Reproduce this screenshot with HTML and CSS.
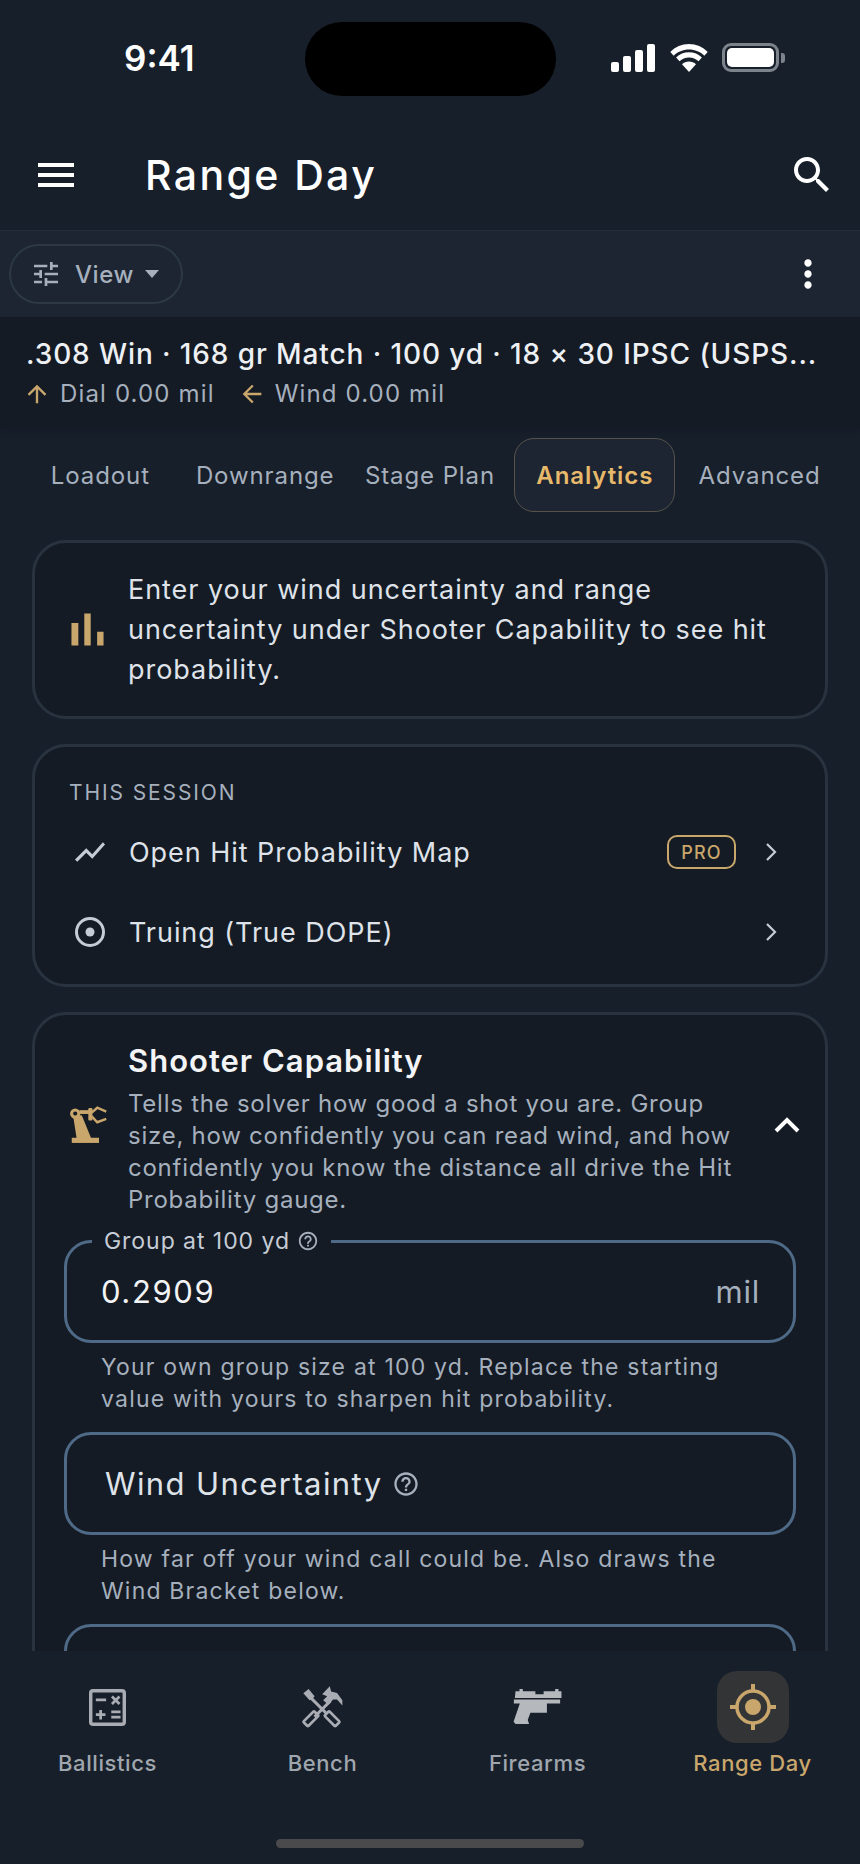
FILE: index.html
```html
<!DOCTYPE html>
<html lang="en">
<head>
  <meta charset="UTF-8">
  <meta name="viewport" content="width=device-width, initial-scale=1.0">
  <title>Range Day</title>
  <link rel="stylesheet" href="styles.css">
</head>
<body>
  <div class="status-bar">
    <span class="clock">9:41</span>
    <div class="island"></div>
    <div class="status-icons">
      <svg class="signal" width="44" height="28" viewBox="0 0 44 28"><rect x="0" y="18" width="8" height="10" rx="2"/><rect x="12" y="12" width="8" height="16" rx="2"/><rect x="24" y="6" width="8" height="22" rx="2"/><rect x="36" y="0" width="8" height="28" rx="2"/></svg>
      <svg class="wifi" width="40" height="28" viewBox="0 0 40 28"><path d="M20 5.500c6 0 11.300 2.300 15.300 6.200l3.400-3.800C33.800 3 27.200 0 20 0S6.200 3 1.300 7.900l3.400 3.800C8.700 7.800 14 5.500 20 5.500z"/><path d="M20 13.500c3.700 0 7 1.400 9.500 3.800l3.400-3.800C29.500 10.100 25 8.200 20 8.200s-9.500 1.900-12.900 5.300l3.400 3.800c2.500-2.400 5.800-3.800 9.500-3.800z"/><path d="M20 28l7-7.800c-1.900-1.700-4.300-2.700-7-2.700s-5.100 1-7 2.700z"/></svg>
      <div class="battery"><div class="battery-fill"></div></div>
      <div class="battery-nub"></div>
    </div>
  </div>

  <header class="app-bar">
    <svg class="menu-icon" width="48" height="48" viewBox="0 0 24 24"><path d="M3 18h18v-2H3v2zm0-5h18v-2H3v2zm0-7v2h18V6H3z"/></svg>
    <h1>Range Day</h1>
    <svg class="search-icon" width="48" height="48" viewBox="0 0 24 24"><path d="M15.500 14h-.79l-.28-.27C15.410 12.590 16 11.110 16 9.500 16 5.910 13.090 3 9.500 3S3 5.910 3 9.500 5.910 16 9.500 16c1.610 0 3.090-.59 4.230-1.570l.27.28v.79l5 4.990L20.490 19l-4.990-5zm-6 0C7.010 14 5 11.990 5 9.500S7.010 5 9.500 5 14 7.010 14 9.500 11.990 14 9.500 14z"/></svg>
  </header>

  <div class="toolbar">
    <div class="view-chip">
      <svg width="32" height="32" viewBox="0 0 24 24"><path d="M3 17v2h6v-2H3zM3 5v2h10V5H3zm10 16v-2h8v-2h-8v-2h-2v6h2zM7 9v2H3v2h4v2h2V9H7zm14 4v-2H11v2h10zm-6-4h2V7h4V5h-4V3h-2v6z"/></svg>
      <span>View</span>
      <div class="caret"></div>
    </div>
    <svg class="more-icon" width="44" height="44" viewBox="0 0 24 24"><path d="M12 8c1.100 0 2-.9 2-2s-.9-2-2-2-2 .9-2 2 .9 2 2 2zm0 2c-1.100 0-2 .9-2 2s.9 2 2 2 2-.9 2-2-.9-2-2-2zm0 6c-1.100 0-2 .9-2 2s.9 2 2 2 2-.9 2-2-.9-2-2-2z"/></svg>
  </div>

  <div class="summary">
    <div class="summary-title">.308 Win · 168 gr Match · 100 yd · 18 × 30 IPSC (USPS...</div>
    <div class="summary-meta">
      <svg class="dial-arrow" width="28" height="28" viewBox="0 0 24 24"><path d="M4 12l1.410 1.410L11 7.830V20h2V7.830l5.580 5.590L20 12l-8-8-8 8z"/></svg>
      <span>Dial 0.00 mil</span>
      <svg class="wind-arrow" width="28" height="28" viewBox="0 0 24 24"><path d="M20 11H7.830l5.590-5.590L12 4l-8 8 8 8 1.410-1.410L7.830 13H20v-2z"/></svg>
      <span>Wind 0.00 mil</span>
    </div>
  </div>

  <nav class="tabs">
    <div class="tab">Loadout</div>
    <div class="tab">Downrange</div>
    <div class="tab">Stage Plan</div>
    <div class="tab active">Analytics</div>
    <div class="tab">Advanced</div>
  </nav>

  <main class="content">
    <section class="card notice">
      <svg class="notice-icon" width="55" height="55" viewBox="0 0 24 24"><path d="M5 9.200h3V19H5zM10.600 5h2.800v14h-2.800zm5.600 8H19v6h-2.800z"/></svg>
      <p>Enter your wind uncertainty and range uncertainty under Shooter Capability to see hit probability.</p>
    </section>

    <section class="card session">
      <div class="section-label">THIS SESSION</div>
      <div class="row">
        <svg class="row-icon" width="36" height="36" viewBox="0 0 24 24"><path d="M3.500 18.490l6-6.010 4 4L22 6.920l-1.410-1.410-7.090 7.970-4-4L2 16.990z"/></svg>
        <span class="row-text">Open Hit Probability Map</span>
        <span class="pro-badge">PRO</span>
        <svg class="chevron" width="14" height="22" viewBox="0 0 14 22"><path d="M3 3l8 8-8 8"/></svg>
      </div>
      <div class="row">
        <svg class="row-icon" width="36" height="36" viewBox="0 0 36 36"><circle class="ring" cx="18" cy="18" r="13.500"/><circle cx="18" cy="18" r="4.500"/></svg>
        <span class="row-text">Truing (True DOPE)</span>
        <svg class="chevron" width="14" height="22" viewBox="0 0 14 22"><path d="M3 3l8 8-8 8"/></svg>
      </div>
    </section>

    <section class="card capability">
      <div class="capability-head">
        <svg class="robot-icon" width="40" height="42" viewBox="58 78 116 120">
          <rect x="66" y="175" width="79" height="15"/>
          <path d="M70 112L80 176H122L95 110z"/>
          <circle class="robot-joint" cx="76" cy="105" r="10.500"/>
          <rect x="88" y="95" width="28" height="11"/>
          <rect x="114" y="89" width="12" height="36" rx="3"/>
          <path class="robot-claw" d="M124 102L140 88L166 99M124 113L140 130L166 120"/>
        </svg>
        <div class="capability-text">
          <h2>Shooter Capability</h2>
          <p>Tells the solver how good a shot you are. Group size, how confidently you can read wind, and how confidently you know the distance all drive the Hit Probability gauge.</p>
        </div>
        <svg class="collapse-icon" width="28" height="18" viewBox="0 0 28 18"><path d="M3 15L14 4l11 11"/></svg>
      </div>

      <div class="field filled">
        <div class="field-label">
          <span>Group at 100 yd</span>
          <svg class="help" width="22" height="22" viewBox="0 0 24 24"><path d="M11 18h2v-2h-2v2zm1-16C6.480 2 2 6.480 2 12s4.480 10 10 10 10-4.480 10-10S17.520 2 12 2zm0 18c-4.410 0-8-3.590-8-8s3.590-8 8-8 8 3.590 8 8-3.590 8-8 8zm0-14c-2.210 0-4 1.790-4 4h2c0-1.100.9-2 2-2s2 .9 2 2c0 2-3 1.750-3 5h2c0-2.250 3-2.500 3-5 0-2.210-1.790-4-4-4z"/></svg>
        </div>
        <span class="field-value">0.2909</span>
        <span class="field-unit">mil</span>
      </div>
      <p class="helper">Your own group size at 100 yd. Replace the starting value with yours to sharpen hit probability.</p>

      <div class="field">
        <span class="field-placeholder">Wind Uncertainty</span>
        <svg class="help" width="28" height="28" viewBox="0 0 24 24"><path d="M11 18h2v-2h-2v2zm1-16C6.480 2 2 6.480 2 12s4.480 10 10 10 10-4.480 10-10S17.520 2 12 2zm0 18c-4.410 0-8-3.590-8-8s3.590-8 8-8 8 3.590 8 8-3.590 8-8 8zm0-14c-2.210 0-4 1.790-4 4h2c0-1.100.9-2 2-2s2 .9 2 2c0 2-3 1.750-3 5h2c0-2.250 3-2.500 3-5 0-2.210-1.790-4-4-4z"/></svg>
      </div>
      <p class="helper">How far off your wind call could be. Also draws the Wind Bracket below.</p>

      <div class="field"></div>
    </section>
  </main>

  <footer class="bottom-nav">
    <div class="nav-items">
      <div class="nav-item">
        <div class="nav-icon">
          <svg width="37" height="37" viewBox="0 0 108 108"><rect class="calc-frame" x="5" y="5" width="98" height="98" rx="7"/><path class="calc-marks" d="M20 32h30M67 22l22 22M89 22L67 44M20 75h28M34 61v28M65 67h27M65 82h27"/></svg>
        </div>
        <span>Ballistics</span>
      </div>
      <div class="nav-item">
        <div class="nav-icon">
          <svg width="42" height="43" viewBox="785 75 125 130">
            <path d="M788 97L804 84L822 106L815 115L807 118z"/>
            <path class="bench-shaft" d="M810 110L856 156M822 168L870 120"/>
            <rect class="bench-line" x="852" y="164" width="46" height="20" rx="3" transform="rotate(45 875 174)"/>
            <rect class="bench-line" x="788" y="164" width="46" height="20" rx="3" transform="rotate(-45 811 174)"/>
            <path d="M845 100L868 76L872 92L890 96L906 118V134L890 116H878L864 132L848 118L860 106z"/>
          </svg>
        </div>
        <span>Bench</span>
      </div>
      <div class="nav-item">
        <div class="nav-icon">
          <svg class="gun" width="50" height="38" viewBox="98 83 150 115"><path d="M105 93H117V86H127V93H165V102H190V93H225V86H235V93H244V113H103z"/><path d="M100 118H240V130H200V158H150L142 180L146 192H105L99 185L118 130H100z"/></svg>
        </div>
        <span>Firearms</span>
      </div>
      <div class="nav-item active">
        <div class="nav-icon">
          <svg width="46" height="46" viewBox="0 0 46 46"><circle class="gps-ring" cx="23" cy="23" r="16"/><circle cx="23" cy="23" r="8"/><path class="gps-ticks" d="M23 0v6M23 40v6M0 23h6M40 23h6"/></svg>
        </div>
        <span>Range Day</span>
      </div>
    </div>
    <div class="home-bar"></div>
  </footer>
</body>
</html>
```

FILE: styles.css
```css
* {
  box-sizing: border-box;
}

html, body {
  margin: 0;
  padding: 0;
}

body {
  width: 860px;
  height: 1864px;
  overflow: hidden;
  display: flex;
  flex-direction: column;
  background: #171f2b;
  color: #e6e9ee;
  font-family: Inter, "Noto Sans", sans-serif;
}

h1, h2, p {
  margin: 0;
  font-weight: normal;
}

/* status bar */
.status-bar {
  height: 115px;
  flex: none;
  display: flex;
  align-items: flex-start;
  padding: 22px 0 0 124px;
  color: #fff;
}

.clock {
  width: 181px;
  font-size: 35px;
  font-weight: 600;
  line-height: 72px;
  letter-spacing: 0;
}

.island {
  width: 251px;
  height: 74px;
  border-radius: 37px;
  background: #000;
}

.status-icons {
  margin-left: 55px;
  padding-top: 21px;
  display: flex;
  align-items: center;
  fill: #fff;
}

.wifi {
  margin-left: 14px;
}

.battery {
  margin-left: 13px;
  width: 57px;
  height: 29px;
  border: 3px solid #7d838b;
  border-radius: 9px;
  padding: 2px;
}

.battery-fill {
  height: 100%;
  border-radius: 5px;
  background: #fff;
}

.battery-nub {
  margin-left: 2px;
  width: 4px;
  height: 10px;
  border-radius: 0 3px 3px 0;
  background: #7d838b;
}

/* app bar */
.app-bar {
  height: 116px;
  flex: none;
  display: flex;
  align-items: center;
  padding: 4px 24px 0 32px;
  border-bottom: 1px solid #232e3b;
  fill: #fff;
}

.app-bar h1 {
  margin-left: 65px;
  flex: 1;
  font-size: 41px;
  font-weight: 500;
  letter-spacing: 2.4px;
  color: #fff;
}

/* view toolbar */
.toolbar {
  height: 86px;
  flex: none;
  display: flex;
  align-items: center;
  justify-content: space-between;
  padding: 0 30px 0 9px;
  background: #1c2531;
}

.view-chip {
  width: 174px;
  height: 60px;
  display: flex;
  align-items: center;
  padding-left: 19px;
  border: 2px solid #2c3846;
  border-radius: 30px;
  fill: #a6b0bd;
  color: #a6b0bd;
  font-size: 24px;
  font-weight: 500;
  letter-spacing: 0.6px;
}

.view-chip span {
  margin-left: 13px;
}

.caret {
  margin-left: 11px;
  width: 0;
  height: 0;
  border-left: 7px solid transparent;
  border-right: 7px solid transparent;
  border-top: 8px solid #a6b0bd;
}

.more-icon {
  fill: #fff;
}

/* ammo summary */
.summary {
  height: 110px;
  flex: none;
  padding: 18px 26px 0;
  background: #141b25;
  box-shadow: 0 3px 6px rgba(10, 14, 20, 0.2);
}

.summary-title {
  font-size: 28px;
  font-weight: 500;
  letter-spacing: 0.9px;
  line-height: 38px;
  color: #eef0f3;
  white-space: nowrap;
}

.summary-meta {
  margin-top: 2px;
  display: flex;
  align-items: center;
  fill: #c9a66b;
  color: #a6b0bd;
  font-size: 24px;
  letter-spacing: 1.15px;
  line-height: 38px;
}

.dial-arrow {
  margin-left: -3px;
}

.summary-meta span {
  margin-left: 9px;
}

.wind-arrow {
  margin-left: 23px;
}

/* tabs */
.tabs {
  height: 113px;
  flex: none;
  display: grid;
  grid-template-columns: repeat(5, 1fr);
  column-gap: 4px;
  align-content: start;
  padding: 11px 20px 0;
}

.tab {
  height: 74px;
  display: flex;
  align-items: center;
  justify-content: center;
  border: 1px solid transparent;
  border-radius: 20px;
  font-size: 24px;
  letter-spacing: 0.9px;
  color: #a6b0bd;
  white-space: nowrap;
}

.tab.active {
  border-color: #57534b;
  background: #1c2531;
  color: #e8b96a;
  font-weight: 600;
}

/* cards */
.content {
  flex: 1;
  min-height: 0;
  overflow: hidden;
  padding: 0 32px;
}

.card {
  border: 3px solid #28333f;
  border-radius: 34px;
  background: #141b25;
  margin-bottom: 25px;
}

.notice {
  height: 179px;
  display: flex;
  align-items: center;
  padding: 0 30px 0 25px;
  fill: #c9a66b;
}

.notice-icon {
  margin-right: 13px;
  flex: none;
}

.notice p {
  font-size: 27px;
  line-height: 40px;
  letter-spacing: 0.95px;
  color: #dfe3e9;
}

.session {
  height: 243px;
  padding: 29px 47px 0 34px;
}

.section-label {
  margin-bottom: 2px;
  font-size: 21px;
  letter-spacing: 1.9px;
  line-height: 34px;
  color: #a6b0bd;
}

.row {
  height: 80px;
  display: flex;
  align-items: center;
}

.row-icon {
  flex: none;
  fill: #c6ccd5;
  margin: 0 21px 0 3px;
}

.row-icon .ring {
  fill: none;
  stroke: #c6ccd5;
  stroke-width: 3;
}

.row-text {
  flex: 1;
  font-size: 27px;
  letter-spacing: 0.95px;
  color: #dfe3e9;
}

.pro-badge {
  width: 69px;
  height: 34px;
  display: flex;
  align-items: center;
  justify-content: center;
  border: 2px solid #c9a66b;
  border-radius: 10px;
  color: #c9a66b;
  font-size: 18px;
  font-weight: 500;
  letter-spacing: 1.2px;
  margin-right: 28px;
}

.chevron {
  flex: none;
  fill: none;
  stroke: #c6ccd5;
  stroke-width: 2.200;
}

.capability {
  padding: 27px 29px 0;
  height: 900px;
}

.capability-head {
  display: flex;
  align-items: center;
  fill: #c9a66b;
}

.robot-icon {
  flex: none;
  margin: -8px 19px 0 5px;
}

.robot-joint {
  fill: none;
  stroke: #c9a66b;
  stroke-width: 9;
}

.robot-claw {
  fill: none;
  stroke: #c9a66b;
  stroke-width: 7;
}

.capability-text {
  flex: 1;
}

.capability h2 {
  font-size: 31px;
  font-weight: 600;
  letter-spacing: 1px;
  line-height: 38px;
  color: #f3f4f6;
}

.capability-text p {
  max-width: 620px;
  margin-top: 8px;
  font-size: 24px;
  line-height: 32px;
  letter-spacing: 0.75px;
  color: #a6b0bd;
}

.collapse-icon {
  flex: none;
  margin: -8px -5px 0 0;
  fill: none;
  stroke: #fff;
  stroke-width: 4;
}

.field {
  position: relative;
  height: 103px;
  display: flex;
  align-items: center;
  padding: 0 33px 0 34px;
  border: 3px solid #4f6a87;
  border-radius: 27px;
  fill: #a6b0bd;
}

.capability-head + .field {
  margin-top: 24px;
}

.field-label {
  position: absolute;
  top: -15px;
  left: 25px;
  display: flex;
  align-items: center;
  height: 26px;
  padding: 0 12px;
  background: #141b25;
  font-size: 23px;
  letter-spacing: 0.95px;
  color: #c6ccd5;
}

.field-label .help {
  margin-left: 7px;
}

.field-value {
  flex: 1;
  font-size: 31px;
  letter-spacing: 1.6px;
  color: #f3f4f6;
}

.field-unit {
  font-size: 31px;
  letter-spacing: 0.8px;
  color: #a6b0bd;
}

.field-placeholder {
  margin: 0 10px 0 4px;
  font-size: 31px;
  letter-spacing: 1.4px;
  color: #dfe3e9;
}

.helper {
  padding: 8px 34px 17px 37px;
  font-size: 23px;
  line-height: 32px;
  letter-spacing: 1.2px;
  color: #a6b0bd;
}

/* bottom nav */
.bottom-nav {
  height: 213px;
  flex: none;
  background: #171f2b;
  padding-top: 20px;
}

.nav-items {
  display: grid;
  grid-template-columns: repeat(4, 215px);
}

.nav-item {
  display: flex;
  flex-direction: column;
  align-items: center;
  font-size: 22px;
  font-weight: 500;
  letter-spacing: 0.6px;
  color: #a0a6ad;
}

.nav-icon {
  width: 72px;
  height: 72px;
  display: flex;
  align-items: center;
  justify-content: center;
  border-radius: 20px;
  fill: #a9adb3;
}

.nav-item span {
  margin-top: 7px;
}

.calc-frame {
  fill: none;
  stroke: #a9adb3;
  stroke-width: 10;
}

.calc-marks {
  fill: none;
  stroke: #a9adb3;
  stroke-width: 8;
}

.bench-shaft {
  fill: none;
  stroke: #a9adb3;
  stroke-width: 9;
}

.bench-line {
  fill: none;
  stroke: #a9adb3;
  stroke-width: 8;
}

.gun {
  fill: #b5b8bd;
}

.nav-item.active {
  color: #c9a66b;
}

.nav-item.active .nav-icon {
  background: #333435;
  fill: #c9a66b;
}

.gps-ring {
  fill: none;
  stroke: #c9a66b;
  stroke-width: 3.500;
}

.gps-ticks {
  fill: none;
  stroke: #c9a66b;
  stroke-width: 4;
}

.home-bar {
  width: 308px;
  height: 9px;
  margin: 63px auto 0;
  border-radius: 5px;
  background: #4a4a4c;
}
```
